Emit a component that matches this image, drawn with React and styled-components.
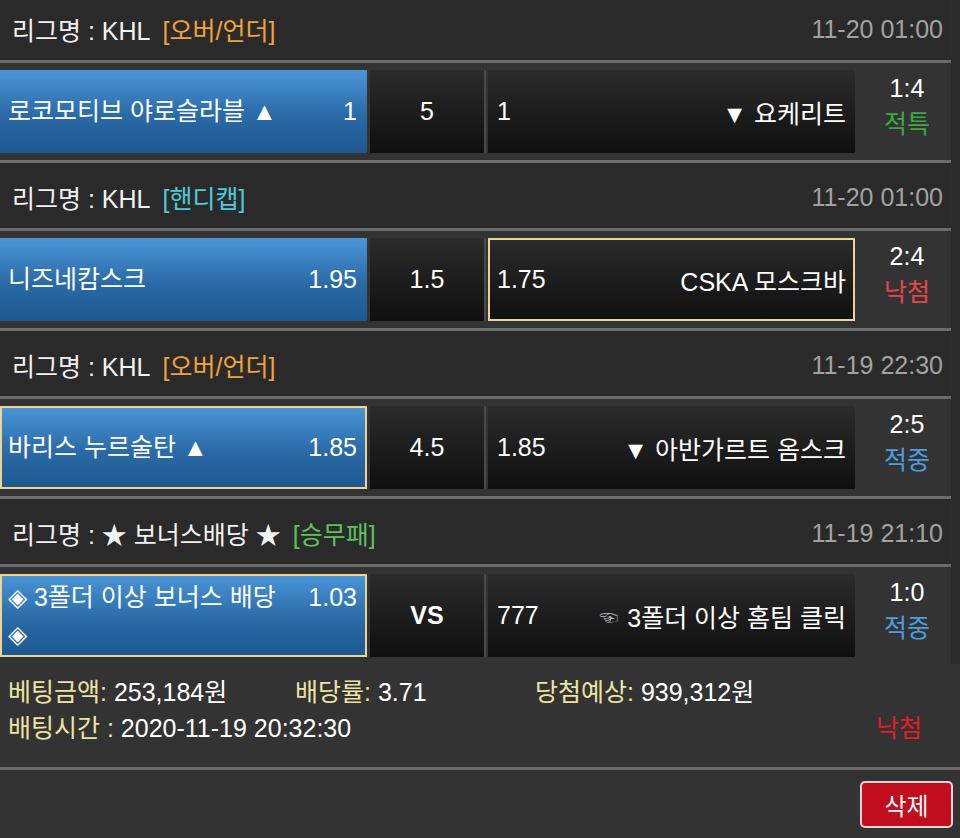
import React from 'react'
import styled, { createGlobalStyle, css } from 'styled-components'

const GlobalStyle = createGlobalStyle`
  body {
    margin: 0;
    background: #2c2c2c;
    font-family: "Liberation Sans", "Noto Sans CJK KR", sans-serif;
    color: #ffffff;
  }
`

const Page = styled.div`
  width: 960px;
  height: 838px;
  overflow: hidden;
  background: #2c2c2c;
`

const List = styled.div`
  width: 951px;
  margin-top: -5px;
`

const Header = styled.div`
  display: flex;
  align-items: center;
  height: 65px;
  padding: 3px 8px 0 12px;
  box-sizing: border-box;
  background: #2a2a2a;
  font-size: 25px;
`

const League = styled.span`
  color: #f2f2f2;
`

const Tag = styled.span`
  margin-left: 12px;
  color: ${p => p.color};
`

const Time = styled.span`
  margin-left: auto;
  color: #a2a2a2;
`

const Divider = styled.div`
  height: 3px;
  background: #6c6c6c;
`

const MatchRow = styled.div`
  display: grid;
  grid-template-columns: 367px 121px 367px 1fr;
  height: 83px;
  padding: 7px 0;
  background: #333333;
`

const selected = css`
  box-shadow: inset 0 0 0 2px #ecd58e;
`

const HomeBox = styled.div`
  display: flex;
  align-items: center;
  padding: 0 10px 0 8px;
  background: linear-gradient(#4a95d8, #2a6aa6 55%, #1d5890);
  font-size: 25px;
  ${p => p.$picked && selected}
`

const HomeInner = styled.div`
  display: flex;
  align-items: flex-start;
  width: 100%;
  line-height: 37px;
`

const TeamName = styled.span`
  flex: 1;
  min-width: 0;
`

const Odds = styled.span`
  min-width: 78px;
  text-align: right;
`

const MidBox = styled.div`
  display: flex;
  align-items: center;
  justify-content: center;
  margin: 0 2px 0 3px;
  background: linear-gradient(#2b2b2b, #0f0f0f);
  border-right: 2px solid #4a4a4a;
  font-size: 25px;
  font-weight: ${p => (p.$bold ? 700 : 400)};
`

const AwayBox = styled.div`
  display: flex;
  align-items: center;
  justify-content: space-between;
  padding: 0 9px 0 9px;
  background: linear-gradient(#2b2b2b, #0f0f0f);
  font-size: 25px;
  ${p => p.$picked && selected}
`

const Hand = styled.span`
  margin-right: 9px;
  font-size: 19px;
  color: #b5b5b5;
  vertical-align: 2px;
`

const ScoreCol = styled.div`
  display: flex;
  flex-direction: column;
  align-items: center;
  justify-content: center;
  padding: 0 0 11px 8px;
  font-size: 25px;
  line-height: 36px;
`

const Result = styled.span`
  color: ${p => p.color};
`

const Summary = styled.div`
  padding: 10px 0 21px 8px;
  background: #333333;
  font-size: 25px;
  line-height: 36px;
`

const SummaryRow = styled.div`
  display: flex;
  align-items: center;
`

const Stat = styled.span`
  width: ${p => p.$w || 'auto'};
`

const Label = styled.span`
  color: #ede3a3;
`

const FinalResult = styled.span`
  margin-left: auto;
  margin-right: 38px;
  color: #e31e24;
`

const Footer = styled.div`
  display: flex;
  justify-content: flex-end;
  padding: 11px 7px 0 0;
  height: 68px;
  box-sizing: border-box;
  background: #333333;
`

const DeleteButton = styled.button`
  width: 93px;
  height: 47px;
  border: 2px solid #e6d4d4;
  border-radius: 5px;
  background: #c20d1c;
  color: #ffffff;
  font-family: inherit;
  font-size: 24px;
  cursor: pointer;
`

const GREEN = '#3aa844'
const RED = '#e4464b'
const BLUE = '#4a9fe0'

const games = [
  {
    tag: '[오버/언더]', tagColor: '#f0a23a', time: '11-20 01:00', league: 'KHL',
    home: '로코모티브 야로슬라블 ▲', homeOdds: '1', mid: '5', awayOdds: '1', away: '▼ 요케리트',
    score: '1:4', result: '적특', resultColor: GREEN,
  },
  {
    tag: '[핸디캡]', tagColor: '#4fcad8', time: '11-20 01:00', league: 'KHL',
    home: '니즈네캄스크', homeOdds: '1.95', mid: '1.5', awayOdds: '1.75', away: 'CSKA 모스크바',
    score: '2:4', result: '낙첨', resultColor: RED, pick: 'away',
  },
  {
    tag: '[오버/언더]', tagColor: '#f0a23a', time: '11-19 22:30', league: 'KHL',
    home: '바리스 누르술탄 ▲', homeOdds: '1.85', mid: '4.5', awayOdds: '1.85', away: '▼ 아반가르트 옴스크',
    score: '2:5', result: '적중', resultColor: BLUE, pick: 'home',
  },
  {
    tag: '[승무패]', tagColor: '#5cc35c', time: '11-19 21:10', league: '★ 보너스배당 ★',
    home: '◈ 3폴더 이상 보너스 배당 ◈', homeOdds: '1.03', mid: 'VS', bold: true, awayOdds: '777',
    away: '3폴더 이상 홈팀 클릭', hand: true,
    score: '1:0', result: '적중', resultColor: BLUE, pick: 'home',
  },
]

export default function App() {
  return (
    <Page>
      <GlobalStyle />
      <List>
        {games.map((g, i) => (
          <React.Fragment key={i}>
            <Header>
              <League>리그명 : {g.league}</League>
              <Tag color={g.tagColor}>{g.tag}</Tag>
              <Time>{g.time}</Time>
            </Header>
            <Divider />
            <MatchRow>
              <HomeBox $picked={g.pick === 'home'}>
                <HomeInner>
                  <TeamName>{g.home}</TeamName>
                  <Odds>{g.homeOdds}</Odds>
                </HomeInner>
              </HomeBox>
              <MidBox $bold={g.bold}>{g.mid}</MidBox>
              <AwayBox $picked={g.pick === 'away'}>
                <span>{g.awayOdds}</span>
                <span>
                  {g.hand && <Hand>☜</Hand>}
                  {g.away}
                </span>
              </AwayBox>
              <ScoreCol>
                <span>{g.score}</span>
                <Result color={g.resultColor}>{g.result}</Result>
              </ScoreCol>
            </MatchRow>
            {i < games.length - 1 && <Divider />}
          </React.Fragment>
        ))}
      </List>
      <Summary>
        <SummaryRow>
          <Stat $w="287px"><Label>베팅금액:</Label> 253,184원</Stat>
          <Stat $w="240px"><Label>배당률:</Label> 3.71</Stat>
          <Stat><Label>당첨예상:</Label> 939,312원</Stat>
        </SummaryRow>
        <SummaryRow>
          <Stat><Label>배팅시간 :</Label> 2020-11-19 20:32:30</Stat>
          <FinalResult>낙첨</FinalResult>
        </SummaryRow>
      </Summary>
      <Divider />
      <Footer>
        <DeleteButton>삭제</DeleteButton>
      </Footer>
    </Page>
  )
}
